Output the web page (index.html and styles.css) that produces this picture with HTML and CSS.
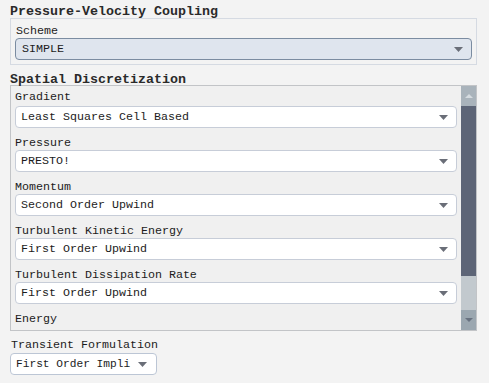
FILE: index.html
```html
<!DOCTYPE html>
<html lang="en">
<head>
	<meta charset="UTF-8">
	<title>Solution Methods</title>
	<link rel="stylesheet" href="styles.css">
</head>
<body>
	<div class="panel">
		<h2 class="section first">Pressure-Velocity Coupling</h2>
		<div class="group">
			<div class="group-label">Scheme</div>
			<div class="select active">
				<span>SIMPLE</span>
				<svg width="9" height="5" viewBox="0 0 9 5"><path d="M0 0h9L4.5 5z" fill="#6a6e78"/></svg>
			</div>
		</div>

		<h2 class="section">Spatial Discretization</h2>
		<div class="scroll-box">
			<div class="scroll-content">
				<div class="field">
					<div class="field-label">Gradient</div>
					<div class="select">
						<span>Least Squares Cell Based</span>
						<svg width="9" height="5" viewBox="0 0 9 5"><path d="M0 0h9L4.5 5z" fill="#6a6e78"/></svg>
					</div>
				</div>
				<div class="field">
					<div class="field-label">Pressure</div>
					<div class="select">
						<span>PRESTO!</span>
						<svg width="9" height="5" viewBox="0 0 9 5"><path d="M0 0h9L4.5 5z" fill="#6a6e78"/></svg>
					</div>
				</div>
				<div class="field">
					<div class="field-label">Momentum</div>
					<div class="select">
						<span>Second Order Upwind</span>
						<svg width="9" height="5" viewBox="0 0 9 5"><path d="M0 0h9L4.5 5z" fill="#6a6e78"/></svg>
					</div>
				</div>
				<div class="field">
					<div class="field-label">Turbulent Kinetic Energy</div>
					<div class="select">
						<span>First Order Upwind</span>
						<svg width="9" height="5" viewBox="0 0 9 5"><path d="M0 0h9L4.5 5z" fill="#6a6e78"/></svg>
					</div>
				</div>
				<div class="field">
					<div class="field-label">Turbulent Dissipation Rate</div>
					<div class="select">
						<span>First Order Upwind</span>
						<svg width="9" height="5" viewBox="0 0 9 5"><path d="M0 0h9L4.5 5z" fill="#6a6e78"/></svg>
					</div>
				</div>
				<div class="field">
					<div class="field-label">Energy</div>
				</div>
			</div>
			<div class="scrollbar">
				<div class="sb-btn sb-up">
					<svg width="8" height="4" viewBox="0 0 8 4"><path d="M0 4h8L4 0z" fill="#d5dbe0"/></svg>
				</div>
				<div class="sb-thumb"></div>
				<div class="sb-track"></div>
				<div class="sb-btn sb-down">
					<svg width="8" height="4" viewBox="0 0 8 4"><path d="M0 0h8L4 4z" fill="#687280"/></svg>
				</div>
			</div>
		</div>

		<div class="field-label outer">Transient Formulation</div>
		<div class="select small">
			<span>First Order Impli</span>
			<svg width="9" height="5" viewBox="0 0 9 5"><path d="M0 0h9L4.5 5z" fill="#6a6e78"/></svg>
		</div>
	</div>
</body>
</html>
```

FILE: styles.css
```css
* {
	margin: 0;
	padding: 0;
	box-sizing: border-box;
}

body {
	font-family: "Liberation Mono", "DejaVu Sans Mono", monospace;
	font-size: 11.67px;
	background: #f3f3f3;
	color: #1c1c1c;
	width: 489px;
	height: 383px;
	overflow: hidden;
}

.panel {
	padding-left: 10px;
	width: 477px;
}

.section {
	font-size: 13.33px;
	font-weight: bold;
	color: #2a2a2a;
	line-height: 13px;
	height: 20px;
	padding-top: 8px;
}

.section.first {
	height: 18px;
	padding-top: 5px;
}

.group {
	border: 1px solid #d5dae2;
	padding: 0 4px 4px;
}

.group-label {
	height: 19px;
	padding-top: 5px;
	line-height: 14px;
	padding-left: 1px;
}

.select {
	height: 22px;
	display: flex;
	align-items: center;
	justify-content: space-between;
	background: #ffffff;
	border: 1px solid #c7cdd8;
	border-radius: 4px;
	padding: 0 8px 0 5px;
	white-space: nowrap;
}

.select.active {
	background: #dfe5ee;
	border-color: #7b8ca1;
	padding-left: 6px;
}

.select svg {
	flex: none;
}

.scroll-box {
	height: 246px;
	border: 1px solid #c2c4c7;
	background: #f0f0f0;
	display: flex;
}

.scroll-content {
	flex: 1;
	padding: 0 4px;
}

.field-label {
	height: 22px;
	padding-top: 8px;
	line-height: 14px;
}

.field:first-child .field-label {
	height: 20px;
	padding-top: 4px;
}

.scrollbar {
	width: 15px;
	display: flex;
	flex-direction: column;
}

.sb-btn {
	height: 20px;
	display: flex;
	align-items: center;
	justify-content: center;
}

.sb-up {
	background: #a9b3bb;
}

.sb-down {
	background: #9ba7b0;
}

.sb-thumb {
	height: 170px;
	background: #5d6577;
}

.sb-track {
	flex: 1;
	background: #c2c9ce;
}

.field-label.outer {
	padding-top: 7px;
	padding-left: 1px;
}

.select.small {
	width: 147px;
	font-size: 11.2px;
	border-color: #bcc6d5;
	padding-right: 9px;
}
```
